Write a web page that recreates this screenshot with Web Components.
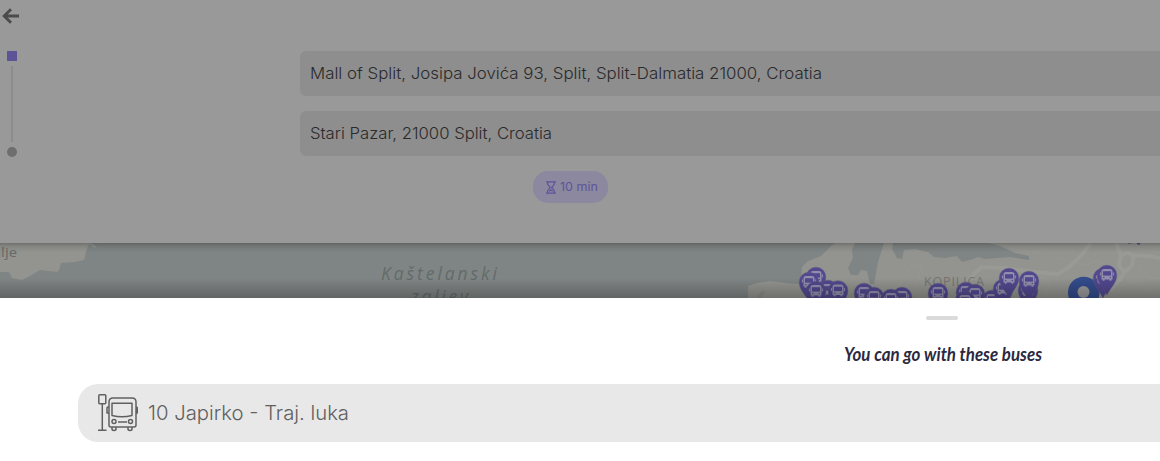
<!DOCTYPE html>
<html lang="en"><head><meta charset="utf-8"><title>Bus route</title>
<style>html,body{margin:0;height:100%;overflow:hidden;background:#fff;font-family:Inter,"Open Sans",sans-serif}</style></head>
<body><route-page></route-page>
<script>
const define=(name,html,init)=>customElements.define(name,class extends HTMLElement{
  constructor(){super();this.attachShadow({mode:'open'});}
  connectedCallback(){const t=document.createElement('template');t.innerHTML=html;this.shadowRoot.replaceChildren(t.content.cloneNode(true));if(init)init.call(this,this.shadowRoot);}
});
// Keeps a label at its designed width, whichever installed face is used.
define('fit-label',`<style>:host{display:block;height:var(--h,24px)}svg{display:block;overflow:visible}</style><svg height="100%"><text x="0"></text></svg>`,function(r){
  const w=this.getAttribute('width'),t=r.querySelector('text'),s=r.querySelector('svg');
  s.setAttribute('width',w);t.textContent=this.getAttribute('text');
  t.setAttribute('y',this.getAttribute('baseline'));t.setAttribute('textLength',w);t.setAttribute('lengthAdjust','spacingAndGlyphs');
  t.setAttribute('fill','currentColor');
});
define('address-field',`<style>:host{display:flex;box-sizing:border-box;height:45px;padding:10px 10px 10px 9.5px;background:#8e8e8e;border-radius:6px 0 0 6px;color:#2a2a2a;font-size:16px;font-weight:300}</style><slot></slot>`);
define('stop-rail',`<style>:host{display:flex;flex-direction:column;align-items:center;width:10px;margin:0 0 -1px 7px}
.a{width:10px;height:10px;background:#5c5494}.l{width:2px;height:76px;margin:5px 0;background:#8c8c8c}.b{width:10px;height:10px;border-radius:50%;background:#6e6e6e}</style><div class="a"></div><div class="l"></div><div class="b"></div>`);
define('time-pill',`<style>:host{display:flex;box-sizing:border-box;width:75px;height:32px;border-radius:15px;background:#8b889f;color:#5e5499;padding:10px 0 0 13px;gap:3.5px;font-size:12px;font-weight:400;--h:16px}svg{display:block;flex:none}</style>
<svg width="10" height="13" fill="none" stroke="currentColor" stroke-width="1.2"><path d="M0 .8H10M0 12.2H10M1.7 1V3.4L4.3 6.5 1.7 9.6V12M8.3 1V3.4L5.7 6.5 8.3 9.6V12M3.2 10.4L5 8.8 6.8 10.4"/></svg><slot></slot>`);
define('route-header',`<style>:host{display:flex;flex-direction:column;box-sizing:border-box;height:243px;background:#999}
.back{height:51px;padding:8px 0 0 2px;box-sizing:border-box}.back svg{display:block}.row{display:grid;grid-template-columns:300px 1fr;align-items:start}.fields{display:grid;gap:15px}.pill{padding:15px 0 0 533px}</style>
<div class="back"><svg width="18" height="16" fill="none" stroke="#4b4b4b" stroke-width="2.9"><path d="M9 1.2L2.2 8 9 14.8M2.2 8H17"/></svg></div>
<div class="row"><stop-rail></stop-rail><div class="fields">
<address-field><fit-label width="512" baseline="18" text="Mall of Split, Josipa Jovića 93, Split, Split-Dalmatia 21000, Croatia"></fit-label></address-field>
<address-field><fit-label width="242" baseline="18" text="Stari Pazar, 21000 Split, Croatia"></fit-label></address-field></div></div>
<div class="pill"><time-pill><fit-label width="38" baseline="10.3" text="10 min"></fit-label></time-pill></div>`);
define('bay-map',`<style>:host{display:block;height:55px;overflow:hidden}svg{display:block}</style>
<svg width="1160" height="55" viewBox="0 243 1160 55">
<defs><linearGradient id="s" x2="0" y2="1"><stop offset="0" stop-color="#000" stop-opacity=".24"/><stop offset=".06" stop-color="#000" stop-opacity=".1"/><stop offset=".17" stop-color="#000" stop-opacity="0"/><stop offset=".64" stop-color="#000" stop-opacity="0"/><stop offset="1" stop-color="#000" stop-opacity=".24"/></linearGradient>
<g id="p"><path d="M0 20C-3 13-9.8 8-9.8 0A9.8 9.8 0 0 1 9.8 0C9.8 8 3 13 0 20Z" fill="#51488f" stroke="#5f5a80" stroke-opacity=".6" stroke-width=".8"/><path d="M-5.5-3.5Q-5.5-6-3-6H3Q5.5-6 5.5-3.5V4.5H4.4V5.8H2.4V4.5H-2.4V5.8H-4.4V4.5H-5.5Z" fill="#938eac"/><path d="M-4-3.8H4V.6H-4Z" fill="#51488f"/><path d="M-6.6-2.5V.5M6.6-2.5V.5" stroke="#938eac" stroke-width="1"/><path d="M-4 2.6H-2.6M2.6 2.6H4" stroke="#51488f"/></g></defs>
<rect y="243" width="1160" height="55" fill="#7f8584"/>
<g fill="#93938f"><path d="M0 243H92L88 246 86 252 84 260 75 262 61 263 59 270 57 272 40 270 30 276 22 280 12 278 9 272H0Z"/><path d="M89 243L93 244 97 248 93 247Z"/>
<path d="M748 298V286L757 283 770 281 786 283 798 284 801 282 802 267 808 261 821 256 831 246 835 243H855L852 250 853 258 848 268 851 275H858L861 270 867 271 870 284H874L878 262 884 243H893L892 249 897 258 902 259 904 250 915 249 928 252 934 257 945 258 950 257 957 256 962 262 970 260 978 257 985 259 1010 257 1029 260V256L1015 253 1000 246 988 243H1160V298Z"/></g>
<path d="M757 298L759 294 764 290 765 293 760 298Z" fill="#8a8c8a"/>
<g fill="none" stroke="#999996"><path stroke-width="4" d="M968 281L974 274 982 267 1003 268 1035 272 1058 274 1068 268 1082 255 1091 243M1116 243L1121 256Q1116 268 1125 271L1119 281 1110 290M1121 256Q1130 249 1133 258Q1134 266 1126 271M1132 255L1147 256 1160 258"/><path d="M903 264L908 270 901 282 898 298M903 264L915 264 921 268 916 286 920 298M960 268L972 279 1000 284M1010 248L1036 253 1049 247M1035 272L1050 284 1044 298M1058 258L1085 265 1100 260M1087 278L1102 262 1113 266M1120 286L1140 280 1155 294M1138 264L1148 278 1160 279" stroke-width=".6"/></g>
<path d="M1137 243.3L1140 244.3" stroke="#51488f" stroke-width="1.5"/><path d="M1128 243H1131" stroke="#51488f" stroke-width="1"/>
<g font-family="Open Sans,sans-serif"><text x="-8" y="257" font-size="13" fill="#686967" textLength="25" lengthAdjust="spacingAndGlyphs">ulje</text><g font-style="italic" fill="#636b6a" font-size="17.5"><text x="381" y="280" textLength="116">Kaštelanski</text><text x="411" y="303" textLength="57">zaljev</text></g><text x="924" y="286" font-size="12.5" fill="#737472" textLength="60">KOPILICA</text></g>
<g class="pins"></g>
<path d="M1084 324C1081 314 1068 305 1068 292.5A15.7 15.7 0 0 1 1099.5 292.5C1099.5 305 1087 314 1084 324Z" fill="#344c8c"/><circle cx="1083.5" cy="292" r="6" fill="#999"/>
<g class="near"></g>
<rect y="243" width="1160" height="55" fill="url(#s)"/></svg>`,function(r){
  const put=(sel,list)=>{const g=r.querySelector(sel);for(const [x,y] of list){const u=document.createElementNS('http://www.w3.org/2000/svg','use');u.setAttribute('href','#p');u.setAttribute('x',x);u.setAttribute('y',y);g.append(u);}};
  put('.pins',[[816,277],[809,282],[828,290],[816,291],[838,290.5],[864,293],[902,297],[874,297],[891,299],[938,293],[966,292],[992,300],[975,294],[965,301],[1003,289],[1028,290],[1029,281],[1009,278]]);
  put('.near',[[1103,278],[1107,275]]);
});
define('bus-row',`<style>:host{display:flex;box-sizing:border-box;height:58px;margin-left:78px;padding:10px 0 0 20px;gap:10px;background:#e8e8e8;border-radius:20px 0 0 20px;color:#606060;font-size:20px;font-weight:300;--h:38px}svg{display:block;flex:none}</style>
<svg width="40" height="38" fill="none" stroke="currentColor" stroke-width="1.5" stroke-linejoin="round"><rect x=".8" y=".8" width="7" height="9" rx="1"/><path d="M4.3 10V36M0 36.3H8.5M15 4H34Q38 4 38 8V31Q38 33 36 33H13Q11 33 11 31V8Q11 4 15 4ZM14 9.3H34V21.5Q24 24 14 21.5ZM11 13H10Q9 13 9 14V19H11M38 13Q39.3 13 39.3 14V19H38M20 28H29"/><circle cx="16" cy="27.5" r="2"/><circle cx="32.5" cy="27.5" r="2"/><path d="M14 33V35Q14 36.5 16 36.5T18 35V33M30 33V35Q30 36.5 32 36.5T34 35V33"/></svg><slot></slot>`);
define('bus-sheet',`<style>:host{display:flex;flex-direction:column;height:163px;background:#fff}.grip{width:32px;height:4px;border-radius:2px;background:#dadada;margin:18px 0 0 926px}.title{height:64px;padding-left:844px;color:#2b2940;font:italic 700 19px Lato,sans-serif;--h:64px}</style>
<div class="grip"></div><div class="title"><fit-label width="198" baseline="41" text="You can go with these buses"></fit-label></div><bus-row><fit-label width="201" baseline="26" text="10 Japirko - Traj. luka"></fit-label></bus-row>`);
define('route-page',`<style>:host{display:flex;flex-direction:column;width:1160px;height:461px;overflow:hidden}</style><route-header></route-header><bay-map></bay-map><bus-sheet></bus-sheet>`);
</script></body></html>
